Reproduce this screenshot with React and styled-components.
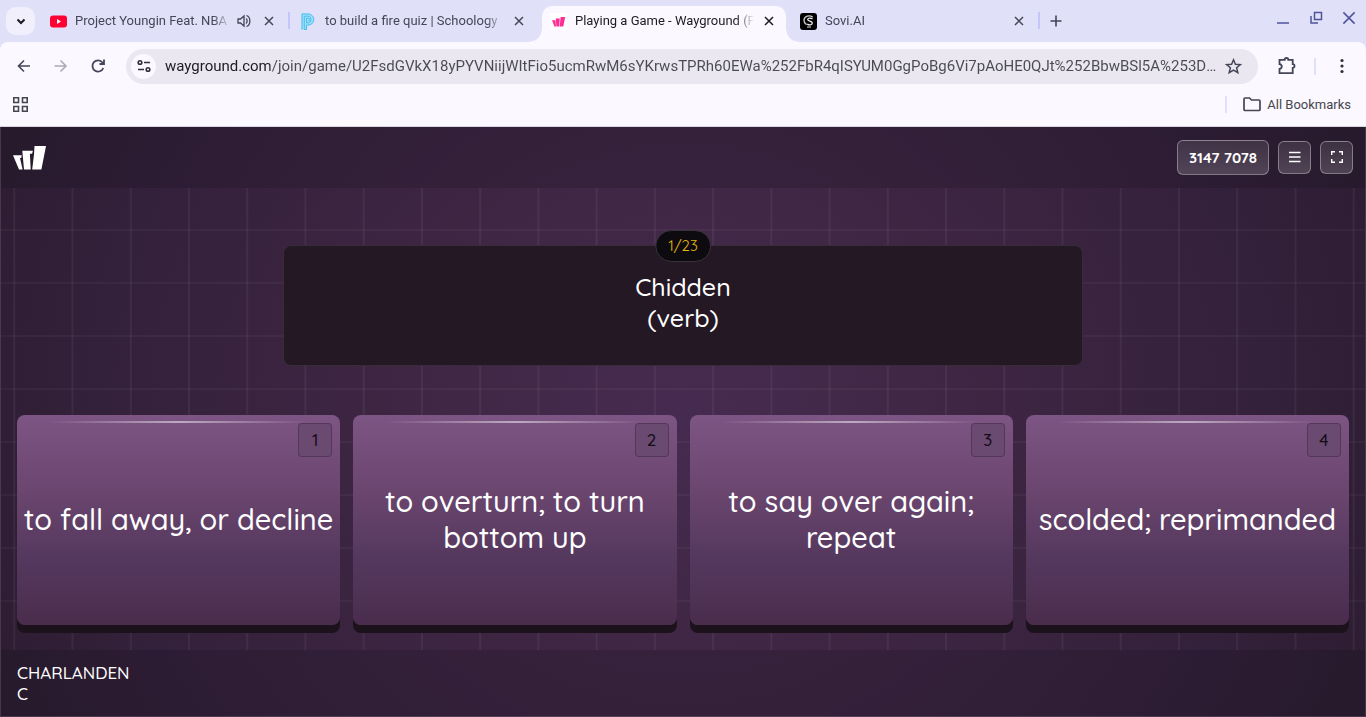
import styled, { createGlobalStyle, css } from "styled-components";

const URL_TEXT =
  "wayground.com/join/game/U2FsdGVkX18yPYVNiijWItFio5ucmRwM6sYKrwsTPRh60EWa%252FbR4qISYUM0GgPoBg6Vi7pAoHE0QJt%252BbwBSl5A%253D%253D?gameType=live";

const tabs = [
  { title: "Project Youngin Feat. NBA Y", icon: "youtube", audio: true, divider: true },
  { title: "to build a fire quiz | Schoology", icon: "schoology" },
  { title: "Playing a Game - Wayground (Fo", icon: "wayground", active: true },
  { title: "Sovi.AI", icon: "sovi", divider: true },
];

const answers = [
  "to fall away, or decline",
  "to overturn; to turn bottom up",
  "to say over again; repeat",
  "scolded; reprimanded",
];

const GlobalStyle = createGlobalStyle`
  * {
    box-sizing: border-box;
  }
  body {
    margin: 0;
    font-family: Roboto, "Liberation Sans", sans-serif;
    background: #2a1c2e;
  }
  button, input {
    font: inherit;
    color: inherit;
    border: 0;
    padding: 0;
    margin: 0;
    background: none;
  }
  svg {
    display: block;
  }
`;

const Page = styled.div`
  min-height: 100vh;
  display: flex;
  flex-direction: column;
`;

/* ---------- browser ---------- */

const Browser = styled.header`
  background: #e0e0f8;
`;

const TabStrip = styled.div`
  display: flex;
  align-items: flex-end;
  height: 42px;
  padding-left: 6px;
  color: #45455a;
`;

const TabSearch = styled.button`
  display: flex;
  align-items: center;
  justify-content: center;
  width: 29px;
  height: 28px;
  margin-bottom: 7px;
  border-radius: 10px;
  background: #f2effd;
  color: #1b1b21;
`;

const Tabs = styled.div`
  display: flex;
  flex: 0 1 994px;
  gap: 6px;
  margin-left: 7px;
  min-width: 0;
`;

const foot = css`
  content: "";
  position: absolute;
  bottom: 0;
  width: 12px;
  height: 12px;
`;

const Tab = styled.div`
  position: relative;
  display: flex;
  align-items: center;
  flex: 1 1 0;
  min-width: 0;
  height: 36px;
  padding: 0 8px 6px;
  font-size: 13px;
  border-radius: 10px 10px 0 0;

  ${(props) =>
    props.$divider &&
    css`
      &::after {
        content: "";
        position: absolute;
        right: -4px;
        top: 6px;
        width: 2px;
        height: 17px;
        background: #c3c5fb;
      }
    `}

  ${(props) =>
    props.$active &&
    css`
      background: #fbf8ff;
      color: #1b1b21;
      &::before {
        ${foot}
        left: -12px;
        background: radial-gradient(circle at 0 0, transparent 11px, #fbf8ff 12px);
      }
      &::after {
        ${foot}
        right: -12px;
        background: radial-gradient(circle at 100% 0, transparent 11px, #fbf8ff 12px);
      }
    `}
`;

const TabTitle = styled.button`
  flex: 1;
  min-width: 0;
  margin: 0 6px 0 8px;
  overflow: hidden;
  white-space: nowrap;
  text-align: left;
  line-height: 18px;
  mask-image: linear-gradient(to left, transparent, #000 18px);
`;

const TabClose = styled.button`
  display: flex;
  align-items: center;
  justify-content: center;
  width: 18px;
  height: 18px;
`;

const Speaker = styled.span`
  margin-right: 9px;
`;

const NewTab = styled.button`
  margin: 0 auto 15px 14px;
`;

const WindowButtons = styled.div`
  display: flex;
  align-items: center;
  gap: 19px;
  height: 100%;
  padding: 0 10px 6px 0;
  color: #4f539c;
`;

const Toolbar = styled.div`
  display: flex;
  align-items: center;
  height: 48px;
  padding: 0 16px 0 15px;
  border-radius: 8px 8px 0 0;
  background: #fbf8ff;
  color: #45455a;
`;

const NavButton = styled.button`
  margin-right: 19px;
  color: ${(props) => (props.disabled ? "#acaab5" : "#45455a")};
`;

const AddressBar = styled.div`
  display: flex;
  align-items: center;
  flex: 1;
  min-width: 0;
  height: 35px;
  margin-right: 20px;
  padding: 0 16px 0 5px;
  border-radius: 18px;
  background: #eae7f1;
`;

const SiteInfo = styled.button`
  display: flex;
  align-items: center;
  justify-content: center;
  width: 25px;
  height: 25px;
  margin-right: 9px;
  border-radius: 50%;
  background: #fbf8ff;
  color: #303036;
`;

/* the host part of the address is darker than the rest */
const Address = styled.input`
  flex: 1;
  min-width: 0;
  height: 24px;
  margin-right: 8px;
  font-size: 15px;
  color: transparent;
  background: linear-gradient(to right, #1b1b21 105px, #4a4a52 105px);
  background-clip: text;
  caret-color: #1b1b21;
  text-overflow: ellipsis;
`;

const ToolbarDivider = styled.span`
  width: 2px;
  height: 17px;
  background: #e0e0fb;
`;

const Extensions = styled.button`
  margin-right: 18px;
`;

const MenuButton = styled.button`
  margin-left: 18px;
`;

const Bookmarks = styled.div`
  display: flex;
  align-items: center;
  height: 37px;
  padding: 0 15px 8px 13px;
  border-bottom: 1px solid #d9d6e2;
  background: #fbf8ff;
  color: #46464e;
  font-size: 13px;
`;

const AppsButton = styled.button`
  margin-right: auto;
`;

const BookmarkButton = styled.button`
  display: flex;
  align-items: center;
  gap: 6px;
  margin-left: 16px;
`;

/* ---------- game ---------- */

const Game = styled.div`
  flex: 1;
  display: flex;
  flex-direction: column;
  border: 1px solid rgba(255, 255, 255, 0.12);
  border-top: 0;
  background: radial-gradient(ellipse 60% 130% at 50% 48%, #462b50 0%, #3e2643 36%, #33203a 72%, #2a1b2e 100%);
  color: #fff;
  font-family: Quicksand, Lato, "Liberation Sans", sans-serif;
`;

const TopBar = styled.div`
  display: flex;
  align-items: center;
  justify-content: flex-end;
  gap: 9px;
  height: 61px;
  padding: 0 12px;
  background: rgba(20, 16, 24, 0.2);
`;

const Home = styled.a`
  margin-right: auto;
  color: #fff;
`;

const glass = css`
  border: 1px solid rgba(255, 255, 255, 0.34);
  border-radius: 6px;
  background: linear-gradient(rgba(255, 255, 255, 0.1), rgba(255, 255, 255, 0.18));
`;

const GameCode = styled.button`
  ${glass}
  height: 35px;
  padding: 0 11px;
  font-size: 15px;
  font-weight: 700;
`;

const SquareButton = styled.button`
  ${glass}
  display: flex;
  align-items: center;
  justify-content: center;
  width: 33px;
  height: 33px;
  padding-bottom: 2px;
`;

const Board = styled.main`
  flex: 1;
  display: flex;
  flex-direction: column;
  align-items: center;
  gap: 49px;
  padding: 57px 16px 25px;
  background-image:
    linear-gradient(to right, rgba(255, 255, 255, 0.05) 2px, transparent 2px),
    linear-gradient(rgba(255, 255, 255, 0.035) 2px, transparent 2px);
  background-size: 4.27% 100%, 100% 53px;
  background-position: center, 0 41px;
`;

const Question = styled.section`
  position: relative;
  width: 100%;
  max-width: 800px;
  min-height: 121px;
  padding: 25px;
  border: 1px solid rgba(255, 255, 255, 0.09);
  border-radius: 8px;
  background: #241824;
  text-align: center;
  font-size: 25px;
  font-weight: 500;
  line-height: 31px;
`;

const Counter = styled.span`
  position: absolute;
  top: -16px;
  left: 50%;
  transform: translateX(-50%);
  padding: 0 12px;
  border: 1px solid #38333b;
  border-radius: 16px;
  background: #0e0b10;
  color: #e3b80f;
  font-size: 15px;
  font-weight: 400;
  line-height: 30px;
`;

const Answers = styled.div`
  flex: 1;
  display: grid;
  grid-template-columns: repeat(4, 1fr);
  gap: 13px;
  width: 100%;
`;

const Answer = styled.button`
  position: relative;
  padding-bottom: 2px;
  border-radius: 8px;
  background: linear-gradient(#7d5584, #6b466f 36%, #55385e 68%, #4a2d4d);
  box-shadow: 0 8px 0 #1c121c;
  font-size: 29px;
  font-weight: 500;
  line-height: 36px;

  &::before {
    content: "";
    position: absolute;
    top: 6px;
    left: 10%;
    right: 10%;
    height: 2px;
    background: linear-gradient(to right, transparent, rgba(255, 255, 255, 0.5), transparent);
  }
`;

const KeyHint = styled.span`
  position: absolute;
  top: 8px;
  right: 8px;
  width: 34px;
  height: 34px;
  border: 1px solid rgba(30, 15, 35, 0.3);
  border-radius: 4px;
  background: #6b4a72;
  color: #120c14;
  font-size: 17px;
  line-height: 31px;
`;

const Footer = styled.footer`
  height: 66px;
  padding: 12px 16px;
  background: rgba(20, 16, 24, 0.2);
`;

const Player = styled.div`
  width: 116px;
  font-size: 17px;
  font-weight: 500;
  line-height: 21px;
`;

/* ---------- icons ---------- */

const Icon = ({ size = 16, box = 16, stroke = 2, children }) => (
  <svg
    width={size}
    height={size}
    viewBox={`0 0 ${box} ${box}`}
    fill="none"
    stroke="currentColor"
    strokeWidth={stroke}
    aria-hidden="true"
  >
    {children}
  </svg>
);

const Cross = ({ size = 10, stroke = 1.5 }) => (
  <Icon size={size} box={10} stroke={stroke}>
    <path d="M1 1l8 8M9 1L1 9" />
  </Icon>
);

const WaygroundMark = ({ width = 33, height = 24, color = "#fff" }) => (
  <svg width={width} height={height} viewBox="0 0 33 24" fill={color} aria-hidden="true">
    <path d="M0 9.300h8.800l-.6 2.800H7L9.600 23.500H6z" />
    <path d="M9.300 4.800h10.600l-.8 3h-2.200l.8 15.700H11z" />
    <path d="M21.500 0H33l-4.600 23.500h-9.200l1.800-15z" />
  </svg>
);

const favicons = {
  youtube: (
    <svg width="17" height="17" viewBox="0 0 17 17" aria-hidden="true">
      <rect y="2.5" width="17" height="12" rx="3" fill="#ff0033" />
      <path d="M7 6l4 2.500L7 11z" fill="#fff" />
    </svg>
  ),
  schoology: (
    <svg width="17" height="17" viewBox="0 0 17 17" fill="none" aria-hidden="true">
      <path d="M1.500.5H8a6 6 0 0 1 0 12H7v4H1.500z" fill="#a5dcf7" />
      <path
        d="M2 16.500V1h6.300a5.500 5.500 0 0 1 0 11H6.500v4.500H4.300V3.200h4a3.400 3.400 0 0 1 0 6.700H6.500V5.400h1.800a1.200 1.200 0 0 1 0 2.400"
        stroke="#35bdf0"
        strokeWidth="0.9"
      />
    </svg>
  ),
  wayground: (
    <svg width="17" height="17" viewBox="0 0 17 17" aria-hidden="true">
      <rect width="17" height="17" fill="#fff" />
      <g transform="translate(2 4) scale(.4)" fill="#ff2e93">
        <path d="M0 8h8.600L10 24H6zM9.300 4h10.200l-1.500 20H11zM21.600 0H33l-4.800 24h-9z" />
      </g>
    </svg>
  ),
  sovi: (
    <svg width="17" height="17" viewBox="0 0 17 17" fill="none" aria-hidden="true">
      <rect width="17" height="17" rx="3" fill="#000" />
      <path d="M12.800 4.200C9.500 1.600 4.200 3 4 7.200c-.1 2.300 1.300 3.600 2.600 4.500" stroke="#ccc" strokeWidth="1.300" />
      <path d="M12.500 6c-2-1.300-4.800-1-4.800.6 0 1.900 4.600 1.200 4.600 3.500 0 1.900-3 2.300-5 1" stroke="#eee" strokeWidth="1.300" />
      <path d="M7 14h4" stroke="#aaa" strokeWidth="1.300" />
    </svg>
  ),
};

const BrowserTab = ({ tab }) => (
  <Tab $active={tab.active} $divider={tab.divider}>
    {favicons[tab.icon]}
    <TabTitle>{tab.title}</TabTitle>
    {tab.audio && (
      <Speaker>
        <Icon size={14} box={14} stroke={1.3}>
          <path d="M1 5v4h2.500L7 12V2L3.500 5zM9 4.500c1.500 1 1.500 4 0 5M9.500 1.500c4.500 1.500 4.500 9.500 0 11" />
        </Icon>
      </Speaker>
    )}
    <TabClose aria-label="Close tab">
      <Cross />
    </TabClose>
  </Tab>
);

const App = () => {
  return (
    <Page>
      <GlobalStyle />
      <Browser>
        <TabStrip>
          <TabSearch aria-label="Search tabs">
            <Icon size={10} box={10}>
              <path d="M1.500 3.500L5 7l3.500-3.500" />
            </Icon>
          </TabSearch>
          <Tabs>
            {tabs.map((tab) => (
              <BrowserTab key={tab.icon} tab={tab} />
            ))}
          </Tabs>
          <NewTab aria-label="New tab">
            <Icon size={12} box={12} stroke={1.6}>
              <path d="M6 .5v11M.5 6h11" />
            </Icon>
          </NewTab>
          <WindowButtons>
            <button aria-label="Minimize">
              <Icon size={14} box={14} stroke={1.5}>
                <path d="M1 12h12" />
              </Icon>
            </button>
            <button aria-label="Restore">
              <Icon size={14} box={14} stroke={1.5}>
                <path d="M5.500 1.500h7v7h-7zM2 5v7h7" />
              </Icon>
            </button>
            <button aria-label="Close window">
              <Cross size={14} stroke={1.1} />
            </button>
          </WindowButtons>
        </TabStrip>
        <Toolbar>
          <NavButton aria-label="Back">
            <Icon size={18} box={18} stroke={1.6}>
              <path d="M15 9H3.500M9 3.500L3.500 9l5.500 5.500" />
            </Icon>
          </NavButton>
          <NavButton aria-label="Forward" disabled>
            <Icon size={18} box={18} stroke={1.6}>
              <path d="M2.500 9H14M8.500 3.500L14 9l-5.500 5.500" />
            </Icon>
          </NavButton>
          <NavButton aria-label="Reload">
            <Icon size={18} box={18} stroke={1.8}>
              <path d="M14.300 11A5.600 5.600 0 1 1 13.500 5.500L15 7M15 2.500V7h-4.500" />
            </Icon>
          </NavButton>
          <AddressBar>
            <SiteInfo aria-label="View site information">
              <Icon size={14} box={14} stroke={1.6}>
                <circle cx="3" cy="3.500" r="1.800" />
                <path d="M7 3.500h6M1 10.500h6" />
                <circle cx="11" cy="10.500" r="1.800" />
              </Icon>
            </SiteInfo>
            <Address aria-label="Address" defaultValue={URL_TEXT} />
            <button aria-label="Bookmark this tab">
              <Icon size={17} box={17} stroke={1.5}>
                <path d="M8.500 1.800l1.900 4.400 5 .4-3.800 3.200 1.200 4.900-4.300-2.600-4.300 2.600 1.200-4.900L1.600 6.600l5-.4z" />
              </Icon>
            </button>
          </AddressBar>
          <Extensions aria-label="Extensions">
            <Icon size={18} box={18} stroke={1.8}>
              <path d="M1.500 2.800h5.200a1.800 1.800 0 0 1 3.600 0h4.400v4.400a1.800 1.800 0 0 1 0 3.600v5.400H1.500v-4.300c3-.4 3-4.400 0-4.800z" />
            </Icon>
          </Extensions>
          <ToolbarDivider />
          <MenuButton aria-label="Menu">
            <svg width="16" height="16" viewBox="0 0 16 16" fill="#303036" aria-hidden="true">
              <circle cx="8" cy="2.500" r="1.600" />
              <circle cx="8" cy="8" r="1.600" />
              <circle cx="8" cy="13.500" r="1.600" />
            </svg>
          </MenuButton>
        </Toolbar>
        <Bookmarks>
          <AppsButton aria-label="Apps">
            <Icon size={15} box={15} stroke={1.6}>
              <path d="M.8.8h4.700v4.700H.8zM9.500.8h4.700v4.700H9.500zM.8 9.500h4.700v4.700H.8zM9.500 9.500h4.700v4.700H9.500z" />
            </Icon>
          </AppsButton>
          <ToolbarDivider />
          <BookmarkButton>
            <Icon size={18} box={18} stroke={1.7}>
              <path d="M1 4a1 1 0 0 1 1-1h4.500l2 2H16a1 1 0 0 1 1 1v8.500a1 1 0 0 1-1 1H2a1 1 0 0 1-1-1z" />
            </Icon>
            All Bookmarks
          </BookmarkButton>
        </Bookmarks>
      </Browser>

      <Game>
        <TopBar>
          <Home href="#" aria-label="Wayground">
            <WaygroundMark />
          </Home>
          <GameCode>3147 7078</GameCode>
          <SquareButton aria-label="Menu">
            <Icon size={12} box={12} stroke={1.3}>
              <path d="M0 1.500h11.500M0 6h11.500M0 10.500h11.500" />
            </Icon>
          </SquareButton>
          <SquareButton aria-label="Full screen">
            <Icon size={12} box={12} stroke={1.4}>
              <path d="M.7 4V.7H4M8 .7h3.300V4M11.300 8v3.300H8M4 11.300H.7V8" />
            </Icon>
          </SquareButton>
        </TopBar>
        <Board>
          <Question>
            <Counter>1/23</Counter>
            Chidden
            <br />
            (verb)
          </Question>
          <Answers>
            {answers.map((text, index) => (
              <Answer key={text}>
                {text}
                <KeyHint>{index + 1}</KeyHint>
              </Answer>
            ))}
          </Answers>
        </Board>
        <Footer>
          <Player>CHARLANDEN C</Player>
        </Footer>
      </Game>
    </Page>
  );
};

export default App;
